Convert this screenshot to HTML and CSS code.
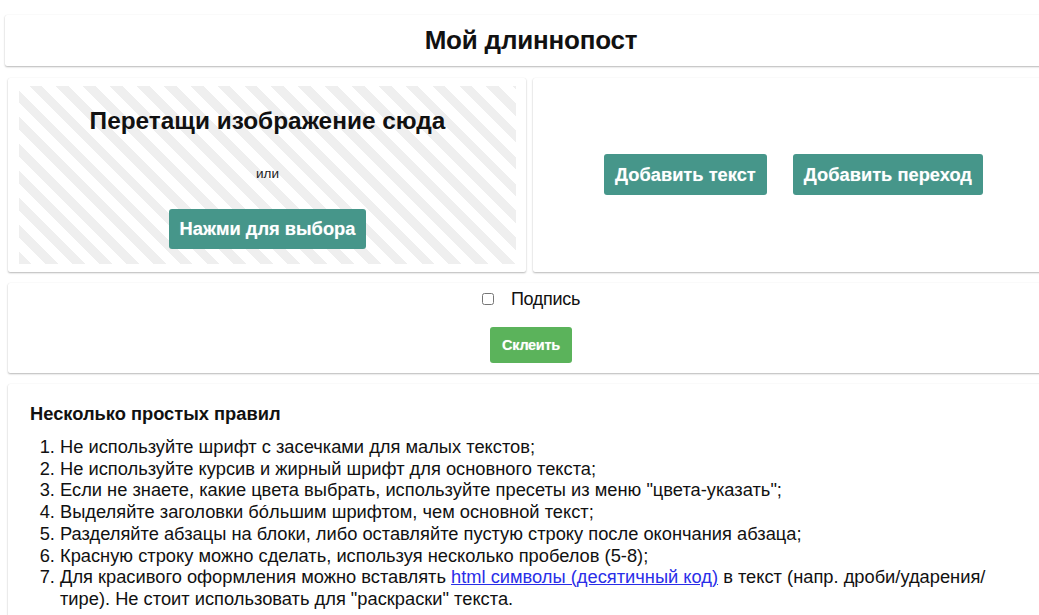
FILE: index.html
```html
<!DOCTYPE html>
<html lang="ru">
<head>
<meta charset="utf-8">
<title>Мой длиннопост</title>
<link rel="stylesheet" href="styles.css">
</head>
<body>
<div class="page">
  <header class="card title-card">
    <h1 class="title">Мой длиннопост</h1>
  </header>

  <section class="row">
    <div class="card upload-card">
      <div class="dropzone">
        <h2 class="drop-title">Перетащи изображение сюда</h2>
        <span class="drop-or">или</span>
        <button class="btn btn-teal btn-pick" type="button">Нажми для выбора</button>
      </div>
    </div>
    <div class="card actions-card">
      <button class="btn btn-teal" type="button">Добавить текст</button>
      <button class="btn btn-teal" type="button">Добавить переход</button>
    </div>
  </section>

  <section class="card submit-card">
    <label class="caption">
      <input type="checkbox" class="caption-box">
      <span>Подпись</span>
    </label>
    <button class="btn btn-green" type="button">Склеить</button>
  </section>

  <section class="card rules-card">
    <h3 class="rules-title">Несколько простых правил</h3>
    <ol class="rules">
      <li>Не используйте шрифт с засечками для малых текстов;</li>
      <li>Не используйте курсив и жирный шрифт для основного текста;</li>
      <li>Если не знаете, какие цвета выбрать, используйте пресеты из меню "цвета-указать";</li>
      <li>Выделяйте заголовки бóльшим шрифтом, чем основной текст;</li>
      <li>Разделяйте абзацы на блоки, либо оставляйте пустую строку после окончания абзаца;</li>
      <li>Красную строку можно сделать, используя несколько пробелов (5-8);</li>
      <li>Для красивого оформления можно вставлять <a href="#" class="link">html символы (десятичный код)</a> в текст (напр. дроби/ударения/ тире). Не стоит использовать для "раскраски" текста.</li>
    </ol>
  </section>
</div>
</body>
</html>
```

FILE: styles.css
```css
html, body {
  margin: 0;
  padding: 0;
  background: #fff;
  overflow: hidden;
}

body {
  font-family: "Liberation Sans", Arial, Helvetica, sans-serif;
  color: #111;
}

.page {
  width: 1046px;
  padding: 15px 0 0 8px;
  display: flex;
  flex-direction: column;
  gap: 11px;
}

.card {
  background: #fff;
  border-radius: 2px;
  box-shadow: 0 1px 2px rgba(0, 0, 0, 0.28), 0 0 1px rgba(0, 0, 0, 0.08);
}

/* heading bar */
.title-card {
  margin-left: -3px;
  margin-right: -3px;
  height: 51px;
  display: flex;
  align-items: center;
  justify-content: center;
}

.title {
  margin: 0;
  font-size: 26px;
  font-weight: bold;
  letter-spacing: -0.2px;
}

/* upload + actions row */
.row {
  display: grid;
  grid-template-columns: 518px 1fr;
  gap: 7px;
  height: 194px;
  margin-top: 1px;
}

.upload-card {
  padding: 8px 10px 8px 11px;
  display: flex;
}

.dropzone {
  flex: 1;
  display: flex;
  flex-direction: column;
  align-items: center;
  background: repeating-linear-gradient(45deg,
    #efefef 0, #efefef 9px,
    #ffffff 9px, #ffffff 19px);
}

.drop-title {
  margin: 20px 0 0;
  font-size: 24.4px;
  font-weight: bold;
  line-height: 30px;
  color: #111;
}

.drop-or {
  margin-top: 31px;
  font-size: 13.5px;
  line-height: 14px;
  color: #222;
}

.btn {
  border: none;
  border-radius: 3px;
  color: #fff;
  font-family: "Liberation Sans", Arial, sans-serif;
  font-weight: bold;
  cursor: pointer;
  text-shadow: 0 0 1px rgba(255, 255, 255, 0.4);
}

.btn-teal {
  background: #46968a;
  font-size: 18.3px;
  height: 41px;
  padding: 0 11px;
}

.btn-pick {
  margin-top: 28px;
  height: 40px;
}

.actions-card {
  display: flex;
  align-items: center;
  justify-content: center;
  gap: 26px;
  padding-bottom: 1px;
}

/* caption + glue */
.submit-card {
  height: 90px;
  display: flex;
  flex-direction: column;
  align-items: center;
}

.caption {
  margin-top: 5px;
  display: flex;
  align-items: center;
  gap: 17px;
  font-size: 18px;
  line-height: 22px;
  color: #111;
  letter-spacing: -0.3px;
}

.caption-box {
  margin: 0;
  width: 12px;
  height: 12px;
  accent-color: #bbb;
}

.btn-green {
  margin-top: 17px;
  background: #5bb35b;
  font-size: 14.5px;
  height: 36px;
  padding: 0 12px;
  letter-spacing: -0.3px;
}

/* rules */
.rules-card {
  height: 260px;
  padding: 19px 0 0 22px;
  box-sizing: border-box;
}

.rules-title {
  margin: 0 0 11px;
  font-size: 18.3px;
  font-weight: bold;
  line-height: 22px;
  color: #111;
}

.rules {
  margin: 0;
  padding-left: 30px;
  font-size: 18.3px;
  line-height: 21.7px;
  color: #111;
  width: 955px;
}

.link {
  color: #2a2ee8;
  text-decoration: underline;
}
```
